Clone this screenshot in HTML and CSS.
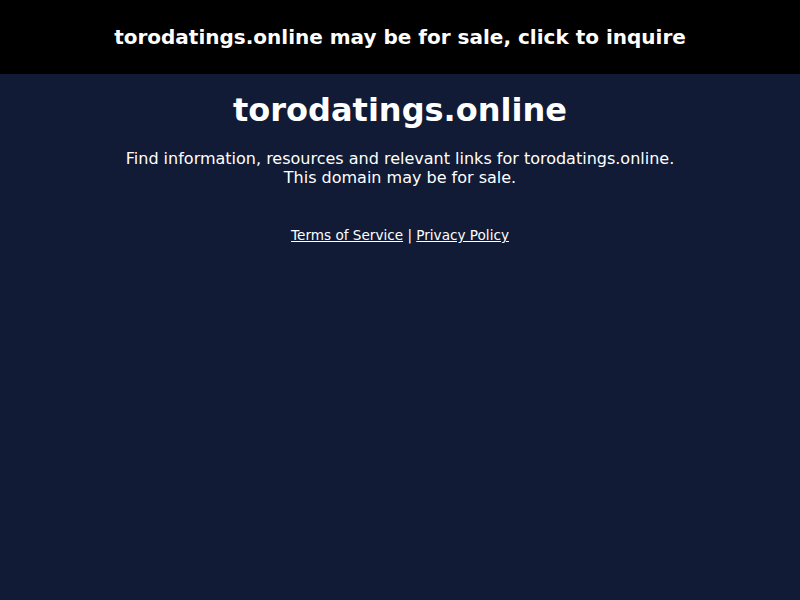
FILE: index.html
```html
<!DOCTYPE html>
<html>
<head>
<meta charset="utf-8">
<link rel="stylesheet" href="styles.css">
</head>
<body>
<a class="banner" href="#">torodatings.online may be for sale, click to inquire</a>
<main class="content">
<h1 class="title">torodatings.online</h1>
<p class="desc">Find information, resources and relevant links for torodatings.online.<br>This domain may be for sale.</p>
<p class="links"><a href="#">Terms of Service</a> | <a href="#">Privacy Policy</a></p>
</main>
</body>
</html>
```
FILE: styles.css
```css
html, body {
  margin: 0;
  padding: 0;
  height: 100%;
}
body {
  background: #111b35;
  color: #ffffff;
  font-family: "DejaVu Sans", sans-serif;
}
.banner {
  display: flex;
  align-items: center;
  justify-content: center;
  height: 74px;
  background: #000000;
  color: #ffffff;
  font-size: 20px;
  font-weight: bold;
  text-decoration: none;
}
.content {
  text-align: center;
}
.title {
  margin: 17px 0 0;
  font-size: 32px;
  font-weight: bold;
  line-height: 38px;
}
.desc {
  margin: 20px 0 0;
  font-size: 16px;
  line-height: 19px;
}
.links {
  margin: 40px 0 0;
  font-size: 13.6px;
  line-height: 17px;
}
.links a {
  color: #ffffff;
}
```
